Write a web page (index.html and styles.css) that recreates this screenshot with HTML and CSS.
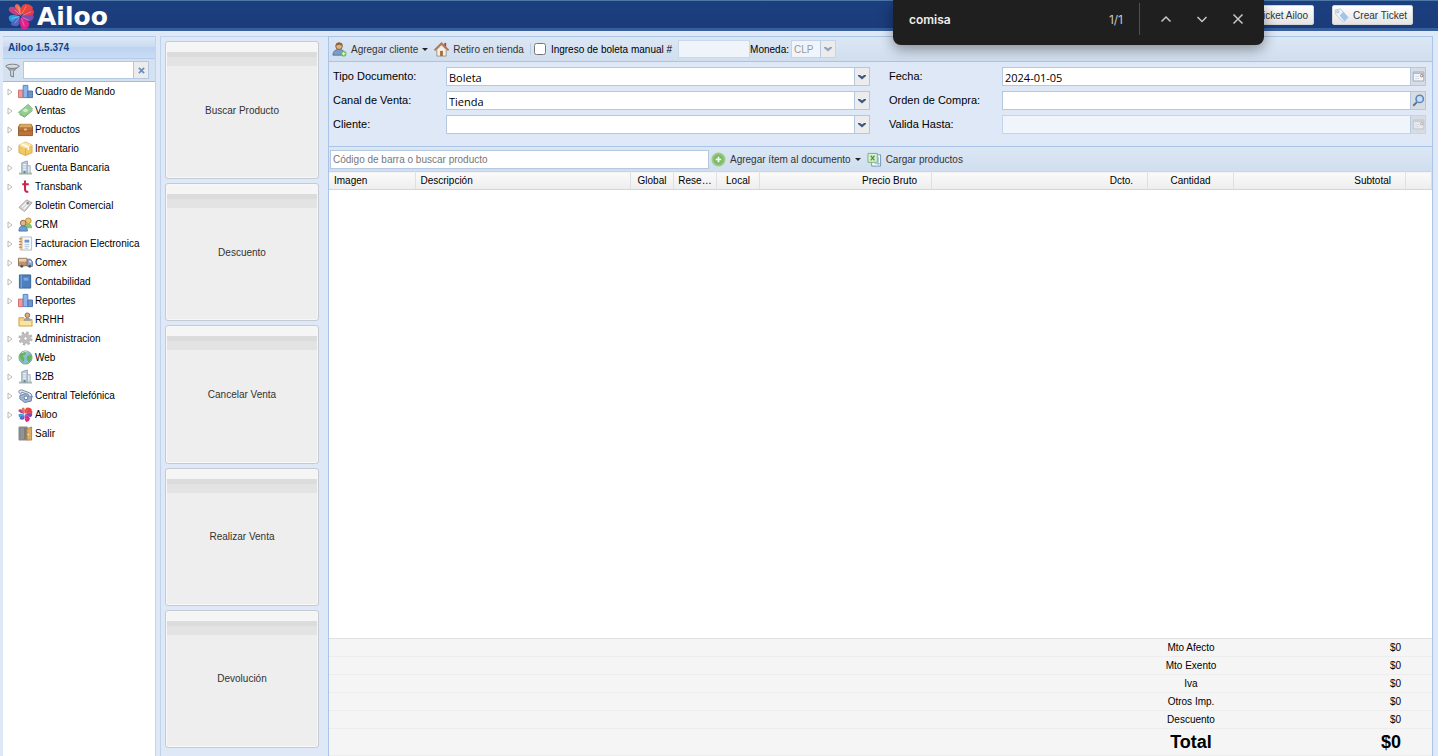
FILE: index.html
```html
<!DOCTYPE html>
<html lang="es">
<head>
  <meta charset="UTF-8">
  <meta name="viewport" content="width=device-width, initial-scale=1.0">
  <title>Ailoo</title>
  <link rel="stylesheet" href="styles.css">
</head>
<body>
  <!-- iconos -->
  <svg class="sprite" aria-hidden="true">
    <symbol id="i-arrow" viewBox="0 0 6 8"><path d="M1 1v6l4-3z" fill="#fff" stroke="#a9a9a9" stroke-width=".8"/></symbol>
    <symbol id="i-down" viewBox="0 0 8 6"><path d="M0 1h2l2 1.500L6 1h2v1L4 5.500 0 2z" fill="#3f5880"/></symbol>
    <symbol id="i-chart" viewBox="0 0 16 16"><path d="M.500 6.500h5v8h-5z" fill="#ef9a9a" stroke="#d26a6a"/><path d="M5.500 1.500h5v13h-5z" fill="#8bb6ec" stroke="#4d82c8"/><path d="M10.500 7.500h5v7h-5z" fill="#6f94c8" stroke="#4a70a8"/></symbol>
    <symbol id="i-money" viewBox="0 0 16 16"><path d="M.500 10L11 1.500l4.500 5L7 14.500z" fill="#97cc93" stroke="#79b377"/><path d="M1.500 12L7 15l8.500-7" fill="none" stroke="#6fa76d"/><ellipse cx="8" cy="7.800" rx="2.500" ry="2" fill="#cdeccb"/></symbol>
    <symbol id="i-box" viewBox="0 0 16 16"><path d="M.500 5.500l1.500-3h12l1.500 3v9H.500z" fill="#b8743a" stroke="#8f5725"/><path d="M1 5.500l1.500-3h11l1.500 3z" fill="#dba765"/><path d="M1 9.500h14" stroke="#9b6029"/><path d="M6.500 7h3v2h-3z" fill="#f1c383"/></symbol>
    <symbol id="i-package" viewBox="0 0 16 16"><path d="M8 1l7 3.500v8L8 15.500l-7-3v-8z" fill="#f1c866" stroke="#d8ac50"/><path d="M1 4.500L8 8l7-3.500L8 1z" fill="#fbe5a8"/><path d="M8 8v7.500" stroke="#d8ac50"/><path d="M4 3l7 3.500v3" fill="none" stroke="#fff" stroke-width="1.500"/></symbol>
    <symbol id="i-building" viewBox="0 0 16 16"><path d="M1 14.500h14" stroke="#a5bd9d" stroke-width="2"/><path d="M4 3l6-2v13H4z" fill="#bccbd9" stroke="#94a5b6"/><path d="M10 6h3v8h-3z" fill="#dfe6ed" stroke="#a5b2bf"/><path d="M5.500 5h3M5.500 7.500h3M5.500 10h3" stroke="#fff"/><path d="M6 12h2v2H6z" fill="#657a91"/></symbol>
    <symbol id="i-transbank" viewBox="0 0 16 16"><path d="M7.500 1.500v9.500q0 3 3.500 2.500M4.500 5.500h7" fill="none" stroke="#c8254d" stroke-width="2.200"/></symbol>
    <symbol id="i-news" viewBox="0 0 16 16"><path d="M1 10l8-8 6 3-8 9.500z" fill="#cfcfcf" stroke="#a8a8a8"/><path d="M4 10l5-5M6 12l5-5.500" stroke="#f5f5f5" stroke-width="1.500"/><circle cx="10.500" cy="5.500" r="1.300" fill="#888"/></symbol>
    <symbol id="i-users" viewBox="0 0 16 16"><circle cx="11" cy="4" r="3" fill="#efc65f" stroke="#b5924c"/><path d="M7 12q0-5 4-5t4 5z" fill="#8ac26f"/><circle cx="5.500" cy="6.500" r="3" fill="#e6b58b" stroke="#8b6845"/><path d="M1 15q0-5.500 4.500-5.500T10 15z" fill="#6d9dd4" stroke="#4d7bb1"/></symbol>
    <symbol id="i-invoice" viewBox="0 0 16 16"><path d="M2.500 1h12v14h-12z" fill="#f6f8fc" stroke="#b3bbc7"/><path d="M2 1h3v14H2z" fill="#f0c08a"/><path d="M7 4h5v3H7z" fill="#6a96d3"/><path d="M7 9h5M7 11h5M7 13h4" stroke="#b0c3da"/><path d="M1 3h3M1 6h3M1 9h3M1 12h3" stroke="#888"/></symbol>
    <symbol id="i-truck" viewBox="0 0 16 16"><path d="M.500 3.500h9v8h-9z" fill="#b9946e" stroke="#907053"/><path d="M1 4h8v3H1z" fill="#ead0b3"/><path d="M10 4.500h3.500l2 3v4.500H10z" fill="#8ea5c8" stroke="#6a7f9f"/><path d="M12 6h1.500l1 2H12z" fill="#e6f1ff"/><circle cx="4" cy="12" r="1.600" fill="#555"/><circle cx="12.500" cy="12" r="1.600" fill="#555"/></symbol>
    <symbol id="i-book" viewBox="0 0 16 16"><path d="M1.500 1h12v14h-12z" fill="#4c80bd" stroke="#35639c"/><path d="M3.500 1v14" stroke="#7ba4d4" stroke-width="1.200"/><path d="M6 4h5v3H6z" fill="#7faade"/></symbol>
    <symbol id="i-folder-user" viewBox="0 0 16 16"><path d="M1 6h5l1 2h8v7H1z" fill="#f4cf74" stroke="#d0a54d"/><circle cx="10" cy="3.500" r="2.500" fill="#dbac82" stroke="#80705d"/><path d="M6 10q0-4 4-4t4 4z" fill="#a0a0a0"/><path d="M2 9.500h12V14H2z" fill="#fbe49d"/></symbol>
    <symbol id="i-gear" viewBox="0 0 16 16"><circle cx="8" cy="8" r="6.300" fill="none" stroke="#b3b3b3" stroke-width="2.400" stroke-dasharray="2.600 2.350"/><circle cx="8" cy="8" r="4" fill="#ddd" stroke="#bdbdbd" stroke-width="3.400"/><circle cx="8" cy="8" r="1.900" fill="#fff" stroke="#9c9c9c" stroke-width=".8"/></symbol>
    <symbol id="i-globe" viewBox="0 0 16 16"><circle cx="8" cy="8" r="7" fill="#8fbcd9" stroke="#6daf6b"/><path d="M2 5q3-5 7-3l-1 3-3 1 2 3-1 4q-4-2-4-8zM10 6l4-1q1.500 5-3 8l-2-4z" fill="#66b361"/><path d="M4 3q3-2 6-1" stroke="#d8f0d5" fill="none"/></symbol>
    <symbol id="i-phone" viewBox="0 0 16 16"><path d="M2 8l9-3 4 4-1 5-7 1.500-5-4z" fill="#a1b5d0" stroke="#6a7f9f"/><path d="M1 5q-1-3 3-3l8 3q3 1 3 4l-3 .500-1-2.500-7-2.500-1 2z" fill="#dbe5f3" stroke="#7085a4"/><circle cx="8.500" cy="10.500" r="2" fill="#fff" stroke="#5d7494"/></symbol>
    <symbol id="i-ailoo" viewBox="0 0 28 28">
      <path d="M13 12Q10 10 7 4q0-3 3-3 4 2 4 11z" fill="#f06a4c"/><path d="M13 12Q12 2 18 1q6 0 8 4-1 6-13 7z" fill="#e8443c"/><path d="M12 13Q4 12 1 8q-1-4 3-4 6 0 8 9z" fill="#c2437f"/><path d="M12 14q-3 6-8 6-4-2-3-6 3-3 11 0z" fill="#2f9fdc"/><path d="M13 14q8-5 13-2 2 5-3 7-6-1-10-5z" fill="#7c4db0"/><path d="M15 12q7-6 11-5 2 2 0 5-5 2-11 0z" fill="#e23a54"/><path d="M13 15q6 0 9 6 0 6-6 7-5-3-3-13z" fill="#e0218a"/><path d="M12 15q1 8-3 9-5 0-6-2 1-5 9-7z" fill="#5364c4"/><path d="M13 13L7 7M13 13l-2-9M14 12l5-9M15 13l9-4M15 15l7 3M14 16l3 8M12 15l-5 6M12 14l-8 2" stroke="#fff" stroke-width=".6" opacity=".55"/>
    </symbol>
    <symbol id="i-door" viewBox="0 0 16 16"><path d="M1 1h9v14H1z" fill="#7d7d7d" stroke="#999"/><path d="M2.500 2h4v12h-4z" fill="#8f9494"/><path d="M9.500 3l5-2v14h-5z" fill="#ddab66" stroke="#b5843f"/><circle cx="11" cy="9" r=".8" fill="#fff3c2"/></symbol>
    <symbol id="i-filter" viewBox="0 0 16 16"><path d="M1 3l5 6v5l3 1V9l6-6z" fill="#9da3a8" stroke="#7e8589"/><ellipse cx="8" cy="3.500" rx="7" ry="2.200" fill="#d8dbdd" stroke="#777d81"/><path d="M7.500 8v5.500" stroke="#f5f5f5" stroke-width="1.200"/></symbol>
    <symbol id="i-useradd" viewBox="0 0 16 16"><circle cx="7.500" cy="4.500" r="3.500" fill="#dfb184" stroke="#7d5f42"/><path d="M4 4q0-4 4-3.500T11 4L8 3z" fill="#8b6540"/><path d="M1 14q0-6 6.500-6T14 14z" fill="#7c9cc6" stroke="#58779e"/><circle cx="12.500" cy="12.500" r="3" fill="#70bd5d"/><path d="M12.500 10.800v3.400M10.800 12.500h3.400" stroke="#fff"/></symbol>
    <symbol id="i-home" viewBox="0 0 16 16"><path d="M11 1h2v5h-2z" fill="#a84236"/><path d="M3 8l5-5 5 5v7H3z" fill="#f3efe6" stroke="#9c948a"/><path d="M.500 9L8 1.500 15.500 9" fill="none" stroke="#b87452" stroke-width="2"/><path d="M6.500 9.500h3V15h-3z" fill="#ae6a32"/></symbol>
    <symbol id="i-add" viewBox="0 0 16 16"><circle cx="8" cy="8" r="6.500" fill="#7dbb66" stroke="#9cca8b" stroke-width="2"/><path d="M8 5v6M5 8h6" stroke="#fff" stroke-width="1.800"/></symbol>
    <symbol id="i-excel" viewBox="0 0 16 16"><path d="M5 3h9.500v12H5z" fill="#fff" stroke="#6c92b5"/><path d="M8 12.500h6M12 5v9" stroke="#8eb5d3"/><path d="M1 1.500h10v9.500H1z" fill="#d8efd0" stroke="#79b077"/><path d="M4 4l4 5M8 4L4 9" stroke="#4b964b" stroke-width="1.400"/></symbol>
    <symbol id="i-calendar" viewBox="0 0 16 16"><path d="M1.500 2.500h13v11h-13z" fill="#f4f8fc" stroke="#8b9fb7"/><path d="M2 3h12v2H2z" fill="#a7bfd8"/><path d="M4 8h5M4 10.500h5" stroke="#ccd6e2"/><circle cx="12" cy="7" r="1.500" fill="#fff" stroke="#8b5b4a"/></symbol>
    <symbol id="i-search" viewBox="0 0 16 16"><path d="M1.500 14.500L6 10" stroke="#55769f" stroke-width="2.600"/><circle cx="9.500" cy="6" r="4.500" fill="#c9dff5" stroke="#5b86bd" stroke-width="2"/></symbol>
    <symbol id="i-tag" viewBox="0 0 16 16"><path d="M1 2l6-1 8 9-5 5-8-8z" fill="#eef4fb" stroke="#b7c9de"/><path d="M6 8l4-4 5 6-4 4z" fill="#a3c4ea"/><circle cx="4" cy="4" r="1.200" fill="#fff" stroke="#9daec2"/></symbol>
  </svg>

  <header class="topbar">
    <a class="logo" href="#"><svg class="logo-mark"><use href="#i-ailoo"/></svg>Ailoo</a>
    <div class="topbar-actions">
      <button class="ticket-btn" type="button"><svg class="icon"><use href="#i-tag"/></svg>Ticket Ailoo</button>
      <button class="ticket-btn" type="button"><svg class="icon"><use href="#i-tag"/></svg>Crear Ticket</button>
    </div>
  </header>

  <div class="layout">
    <!-- menu lateral -->
    <nav class="sidebar">
      <h1 class="sidebar-title">Ailoo 1.5.374</h1>
      <div class="filter">
        <svg class="icon"><use href="#i-filter"/></svg>
        <input class="filter-input" type="text" aria-label="Filtrar">
        <button class="filter-clear" type="button" aria-label="Limpiar"><svg viewBox="0 0 8 8"><path d="M1 1l6 6M7 1L1 7" stroke="#6f8fb8" stroke-width="2"/></svg></button>
      </div>
      <ul class="tree">
        <li><svg class="arrow"><use href="#i-arrow"/></svg><a href="#"><svg class="icon"><use href="#i-chart"/></svg>Cuadro de Mando</a></li>
        <li><svg class="arrow"><use href="#i-arrow"/></svg><a href="#"><svg class="icon"><use href="#i-money"/></svg>Ventas</a></li>
        <li><svg class="arrow"><use href="#i-arrow"/></svg><a href="#"><svg class="icon"><use href="#i-box"/></svg>Productos</a></li>
        <li><svg class="arrow"><use href="#i-arrow"/></svg><a href="#"><svg class="icon"><use href="#i-package"/></svg>Inventario</a></li>
        <li><svg class="arrow"><use href="#i-arrow"/></svg><a href="#"><svg class="icon"><use href="#i-building"/></svg>Cuenta Bancaria</a></li>
        <li><svg class="arrow"><use href="#i-arrow"/></svg><a href="#"><svg class="icon"><use href="#i-transbank"/></svg>Transbank</a></li>
        <li class="leaf"><a href="#"><svg class="icon"><use href="#i-news"/></svg>Boletin Comercial</a></li>
        <li><svg class="arrow"><use href="#i-arrow"/></svg><a href="#"><svg class="icon"><use href="#i-users"/></svg>CRM</a></li>
        <li><svg class="arrow"><use href="#i-arrow"/></svg><a href="#"><svg class="icon"><use href="#i-invoice"/></svg>Facturacion Electronica</a></li>
        <li><svg class="arrow"><use href="#i-arrow"/></svg><a href="#"><svg class="icon"><use href="#i-truck"/></svg>Comex</a></li>
        <li><svg class="arrow"><use href="#i-arrow"/></svg><a href="#"><svg class="icon"><use href="#i-book"/></svg>Contabilidad</a></li>
        <li><svg class="arrow"><use href="#i-arrow"/></svg><a href="#"><svg class="icon"><use href="#i-chart"/></svg>Reportes</a></li>
        <li class="leaf"><a href="#"><svg class="icon"><use href="#i-folder-user"/></svg>RRHH</a></li>
        <li><svg class="arrow"><use href="#i-arrow"/></svg><a href="#"><svg class="icon"><use href="#i-gear"/></svg>Administracion</a></li>
        <li><svg class="arrow"><use href="#i-arrow"/></svg><a href="#"><svg class="icon"><use href="#i-globe"/></svg>Web</a></li>
        <li><svg class="arrow"><use href="#i-arrow"/></svg><a href="#"><svg class="icon"><use href="#i-building"/></svg>B2B</a></li>
        <li><svg class="arrow"><use href="#i-arrow"/></svg><a href="#"><svg class="icon"><use href="#i-phone"/></svg>Central Telefónica</a></li>
        <li><svg class="arrow"><use href="#i-arrow"/></svg><a href="#"><svg class="icon"><use href="#i-ailoo"/></svg>Ailoo</a></li>
        <li class="leaf"><a href="#"><svg class="icon"><use href="#i-door"/></svg>Salir</a></li>
      </ul>
    </nav>

    <!-- acciones de venta -->
    <div class="actions">
      <button class="action-btn" type="button">Buscar Producto</button>
      <button class="action-btn" type="button">Descuento</button>
      <button class="action-btn" type="button">Cancelar Venta</button>
      <button class="action-btn" type="button">Realizar Venta</button>
      <button class="action-btn" type="button">Devolución</button>
    </div>

    <main class="sale">
      <div class="toolbar">
        <button class="tool-btn" type="button"><svg class="icon"><use href="#i-useradd"/></svg>Agregar cliente<span class="caret"></span></button>
        <button class="tool-btn" type="button"><svg class="icon"><use href="#i-home"/></svg>Retiro en tienda</button>
        <label class="manual"><input type="checkbox">Ingreso de boleta manual #</label>
        <input class="manual-number" type="text" aria-label="Boleta manual" disabled>
        <label class="currency-label" for="moneda">Moneda:</label>
        <div class="field currency disabled">
          <select id="moneda" disabled><option>CLP</option></select>
          <span class="trigger"><svg class="chevron"><use href="#i-down"/></svg></span>
        </div>
      </div>

      <form class="doc-form">
        <div class="form-col">
          <div class="form-row">
            <label for="tipo">Tipo Documento:</label>
            <div class="field"><select id="tipo"><option>Boleta</option></select><span class="trigger"><svg class="chevron"><use href="#i-down"/></svg></span></div>
          </div>
          <div class="form-row">
            <label for="canal">Canal de Venta:</label>
            <div class="field"><select id="canal"><option>Tienda</option></select><span class="trigger"><svg class="chevron"><use href="#i-down"/></svg></span></div>
          </div>
          <div class="form-row">
            <label for="cliente">Cliente:</label>
            <div class="field"><select id="cliente"><option></option></select><span class="trigger"><svg class="chevron"><use href="#i-down"/></svg></span></div>
          </div>
        </div>
        <div class="form-col">
          <div class="form-row">
            <label for="fecha">Fecha:</label>
            <div class="field"><input id="fecha" type="text" value="2024-01-05"><button class="trigger grey" type="button" aria-label="Elegir fecha"><svg><use href="#i-calendar"/></svg></button></div>
          </div>
          <div class="form-row">
            <label for="orden">Orden de Compra:</label>
            <div class="field"><input id="orden" type="text"><button class="trigger grey" type="button" aria-label="Buscar orden"><svg><use href="#i-search"/></svg></button></div>
          </div>
          <div class="form-row">
            <label for="valida">Valida Hasta:</label>
            <div class="field disabled"><input id="valida" type="text" disabled><button class="trigger grey" type="button" aria-label="Elegir fecha" disabled><svg><use href="#i-calendar"/></svg></button></div>
          </div>
        </div>
      </form>

      <div class="toolbar product-bar">
        <input class="product-search" type="text" placeholder="Código de barra o buscar producto" aria-label="Código de barra o buscar producto">
        <button class="tool-btn" type="button"><svg class="icon"><use href="#i-add"/></svg>Agregar ítem al documento<span class="caret"></span></button>
        <button class="tool-btn" type="button"><svg class="icon"><use href="#i-excel"/></svg>Cargar productos</button>
      </div>

      <div class="items">
        <table class="grid">
          <colgroup><col class="c-img"><col><col class="c-stock"><col class="c-stock"><col class="c-stock"><col class="c-price"><col class="c-disc"><col class="c-qty"><col class="c-price"><col class="c-end"></colgroup>
          <thead>
            <tr>
              <th>Imagen</th>
              <th>Descripción</th>
              <th class="center">Global</th>
              <th class="center">Rese…</th>
              <th class="center">Local</th>
              <th class="num">Precio Bruto</th>
              <th class="num">Dcto.</th>
              <th class="center">Cantidad</th>
              <th class="num">Subtotal</th>
              <th></th>
            </tr>
          </thead>
        </table>
      </div>

      <table class="totals">
        <colgroup><col><col class="c-qty"><col class="c-price"><col class="c-end"></colgroup>
        <tbody>
          <tr><td></td><th>Mto Afecto</th><td class="num">$0</td><td></td></tr>
          <tr><td></td><th>Mto Exento</th><td class="num">$0</td><td></td></tr>
          <tr><td></td><th>Iva</th><td class="num">$0</td><td></td></tr>
          <tr><td></td><th>Otros Imp.</th><td class="num">$0</td><td></td></tr>
          <tr><td></td><th>Descuento</th><td class="num">$0</td><td></td></tr>
          <tr class="total"><td></td><th>Total</th><td class="num">$0</td><td></td></tr>
        </tbody>
      </table>
    </main>
  </div>

  <!-- barra de busqueda flotante -->
  <div class="findbar">
    <input class="find-input" type="text" value="comisa" aria-label="Buscar">
    <span class="find-count">1/1</span>
    <div class="find-buttons">
      <button type="button" aria-label="Anterior"><svg viewBox="0 0 12 12"><path d="M1.500 8.500L6 4l4.500 4.500"/></svg></button>
      <button type="button" aria-label="Siguiente"><svg viewBox="0 0 12 12"><path d="M1.500 4L6 8.500 10.500 4"/></svg></button>
      <button type="button" aria-label="Cerrar"><svg viewBox="0 0 12 12"><path d="M1.500 1.500l9 9M10.500 1.500l-9 9"/></svg></button>
    </div>
  </div>
</body>
</html>
```
FILE: styles.css
```css
* {
  box-sizing: border-box;
}

body {
  margin: 0;
  height: 100vh;
  display: flex;
  flex-direction: column;
  position: relative;
  overflow: hidden;
  background: #dfe8f6;
  color: #000;
  font-family: "Liberation Sans", Arial, sans-serif;
  font-size: 10px;
}

button, input, select {
  font-family: inherit;
  font-size: inherit;
  margin: 0;
}

.sprite {
  display: none;
}

.icon {
  width: 15px;
  height: 15px;
  flex: none;
}

/* cabecera */
.topbar {
  height: 31px;
  flex: none;
  display: flex;
  justify-content: space-between;
  padding: 0 25px 0 8px;
  background: linear-gradient(#1c3f80, #1b3c7a);
  border-top: 1px solid #4c78a8;
  border-bottom: 3px solid #365f9c;
}

.logo {
  display: flex;
  gap: 2px;
  color: #fff;
  font: bold 25px/32px "DejaVu Sans", sans-serif;
  text-decoration: none;
}

.logo-mark {
  width: 27px;
  height: 27px;
  margin-top: 2px;
}

.topbar-actions {
  display: flex;
  gap: 18px;
  padding-top: 4px;
}

.ticket-btn {
  display: flex;
  align-items: center;
  gap: 4px;
  height: 20px;
  padding: 0 5px 0 1px;
  border: 1px solid #d5d5d5;
  border-radius: 2px;
  background: linear-gradient(#fff, #e4e4e4);
  color: #333;
}

.layout {
  flex: 1;
  min-height: 0;
  display: flex;
  padding: 5px 5px 0 3px;
}

/* menu lateral */
.sidebar {
  width: 153px;
  flex: none;
  display: flex;
  flex-direction: column;
  margin-right: 4px;
  border-right: 1px solid #c3d3e8;
}

.sidebar-title {
  height: 23px;
  margin: 0;
  padding: 0 5px;
  border: 1px solid #b3cbe8;
  border-width: 1px 0;
  background: linear-gradient(#dce8f6, #cbdcf2 45%, #bdd3ef 50%, #c9dcf5);
  color: #15428b;
  font-size: 10px;
  line-height: 22px;
}

.filter {
  display: flex;
  align-items: center;
  height: 22px;
  padding: 0 6px 0 2px;
  background: #d3e1f1;
}

.filter-input {
  flex: 1;
  min-width: 0;
  height: 18px;
  margin-left: 3px;
  border: 1px solid #b5c8e0;
  background: #fff;
}

.filter-clear {
  display: flex;
  align-items: center;
  justify-content: center;
  width: 15px;
  height: 18px;
  padding: 0;
  border: 1px solid #b5c8e0;
  border-left: 0;
  background: #ececec;
}

.filter-clear svg {
  width: 7px;
  height: 7px;
}

.tree {
  flex: 1;
  margin: 0;
  padding: 0;
  list-style: none;
  background: #fff;
  border-top: 1px solid #99bce8;
}

.tree li {
  display: flex;
  align-items: center;
  gap: 9px;
  height: 19px;
  padding-left: 4px;
}

.tree .leaf {
  padding-left: 15px;
}

.tree a {
  display: flex;
  align-items: center;
  gap: 2px;
  color: #000;
  text-decoration: none;
}

.arrow {
  width: 6px;
  height: 8px;
  margin-right: -4px;
}

/* botones de acciones */
.actions {
  width: 168px;
  flex: none;
  display: flex;
  flex-direction: column;
  gap: 4px;
  padding: 4px 9px 8px 4px;
  border: 1px solid #c0d3eb;
  border-width: 1px 0 0 1px;
}

.action-btn {
  flex: 1;
  padding: 0;
  border: 1px solid #c6cbd3;
  border-radius: 3px;
  background: linear-gradient(#f5f5f5 10px, #dcdcdc 10px, #dcdcdc 15px, #e3e3e3 15px, #e3e3e3 24px, #eee 24px);
  box-shadow: inset 0 0 0 1px #f7f7f7;
  color: #333;
}

/* panel de venta */
.sale {
  flex: 1;
  min-width: 0;
  display: flex;
  flex-direction: column;
  border: 1px solid #a9c4e6;
  border-bottom: 0;
  background: #fff;
}

.toolbar {
  display: flex;
  align-items: center;
  height: 24px;
  flex: none;
  padding-left: 3px;
  background: linear-gradient(#dce7f4, #d0deef);
}

.tool-btn {
  display: flex;
  align-items: center;
  gap: 4px;
  padding: 0;
  margin-right: 6px;
  border: 0;
  background: none;
  color: #333;
}

.caret {
  border: 3px solid transparent;
  border-top-color: #222;
  border-bottom: 0;
}

.manual {
  display: flex;
  align-items: center;
  gap: 5px;
  padding-left: 3px;
  margin-right: 6px;
  border-left: 1px solid #b9cce4;
}

.manual input {
  width: 12px;
  height: 12px;
}

.manual-number {
  width: 72px;
  height: 18px;
  border: 1px solid #c9d9ec;
  background: #eff4fb;
}

.field {
  flex: 1;
  min-width: 0;
  display: flex;
  height: 19px;
  border: 1px solid #b5c8e0;
  background: #fff;
}

.field select,
.field input {
  flex: 1;
  min-width: 0;
  padding: 1px 2px 0;
  border: 0;
  border-radius: 0;
  outline: 0;
  background: none;
  color: #000;
  font: 11px "Open Sans", sans-serif;
  appearance: none;
}

.trigger {
  display: flex;
  align-items: center;
  justify-content: center;
  width: 15px;
  padding: 0;
  border: 0;
  border-left: 1px solid #b5c8e0;
  background: #ececec;
}

.trigger svg {
  width: 13px;
  height: 13px;
}

.trigger .chevron {
  width: 8px;
  height: 6px;
}

.trigger.grey {
  background: #d9dde2;
}

.field.disabled {
  border-color: #c5d5e9;
  background: #f0f5fb;
}

.field.disabled .trigger svg {
  opacity: 0.5;
}

.currency-label {
  margin-right: 2px;
}

.currency {
  flex: none;
  width: 45px;
  height: 18px;
}

.currency select {
  padding-top: 0;
  color: #999;
  font: 10px "Liberation Sans", Arial, sans-serif;
  opacity: 1;
}

/* datos del documento */
.doc-form {
  display: grid;
  grid-template-columns: 1fr 1fr;
  gap: 19px;
  padding: 5px 6px 12px 4px;
  border: 1px solid #a9c4e6;
  border-width: 1px 0;
  background: #dfe8f6;
  font-size: 11px;
}

.form-col {
  display: flex;
  flex-direction: column;
  gap: 5px;
}

.form-row {
  display: flex;
}

.form-row label {
  width: 113px;
  line-height: 18px;
}

.product-bar {
  padding-left: 1px;
}

.product-search {
  width: 379px;
  height: 19px;
  margin-right: 2px;
  padding: 0 2px;
  border: 1px solid #b5c8e0;
  background: #fff;
}

.product-search::placeholder {
  color: #777;
}

/* grilla de productos */
.items {
  flex: 1;
}

.grid,
.totals {
  width: 100%;
  table-layout: fixed;
  border-collapse: collapse;
}

.c-img { width: 86px; }
.c-stock { width: 43px; }
.c-price { width: 172px; }
.c-disc { width: 216px; }
.c-qty { width: 86px; }
.c-end { width: 26px; }

.grid th {
  height: 18px;
  padding: 0 5px;
  border-right: 1px solid #dcdfe4;
  border-bottom: 1px solid #d5d5d5;
  border-top: 1px solid #c5d5e9;
  background: linear-gradient(#fafafa, #ededed);
  font-weight: normal;
  text-align: left;
  white-space: nowrap;
}

.grid .center {
  padding: 0;
  text-align: center;
}

.grid .num {
  padding-right: 14px;
  text-align: right;
}

/* totales */
.totals {
  background: #f5f5f5;
  border-top: 1px solid #e2e2e2;
  border-bottom: 1px solid #ddd;
}

.totals td,
.totals th {
  height: 18px;
  padding: 0;
  border-bottom: 1px solid #ededed;
  font-weight: normal;
}

.totals .num {
  padding-right: 5px;
  text-align: right;
}

.totals .total td,
.totals .total th {
  height: 27px;
  font-size: 18px;
  font-weight: bold;
}

/* barra de busqueda */
.findbar {
  position: absolute;
  top: 0;
  right: 174px;
  display: flex;
  align-items: center;
  width: 371px;
  height: 45px;
  padding: 0 14px 7px 16px;
  border-radius: 0 0 8px 8px;
  background: #1f1f1f;
  box-shadow: 0 4px 14px rgba(0, 0, 0, 0.4);
  color: #e3e3e3;
  font-family: Inter, sans-serif;
  font-size: 12px;
}

.find-input {
  flex: 1;
  min-width: 0;
  padding: 0;
  border: 0;
  background: none;
  color: #eee;
  font-weight: 600;
}

.find-count {
  padding-right: 16px;
  color: #c7c7c7;
}

.find-buttons {
  display: flex;
  align-items: center;
  gap: 12px;
  height: 32px;
  padding-left: 14px;
  border-left: 1px solid #505050;
}

.find-buttons button {
  display: flex;
  align-items: center;
  justify-content: center;
  width: 24px;
  height: 24px;
  padding: 0;
  border: 0;
  background: none;
}

.find-buttons svg {
  width: 12px;
  height: 12px;
  fill: none;
  stroke: #c7c7c7;
  stroke-width: 1.5;
}
```
